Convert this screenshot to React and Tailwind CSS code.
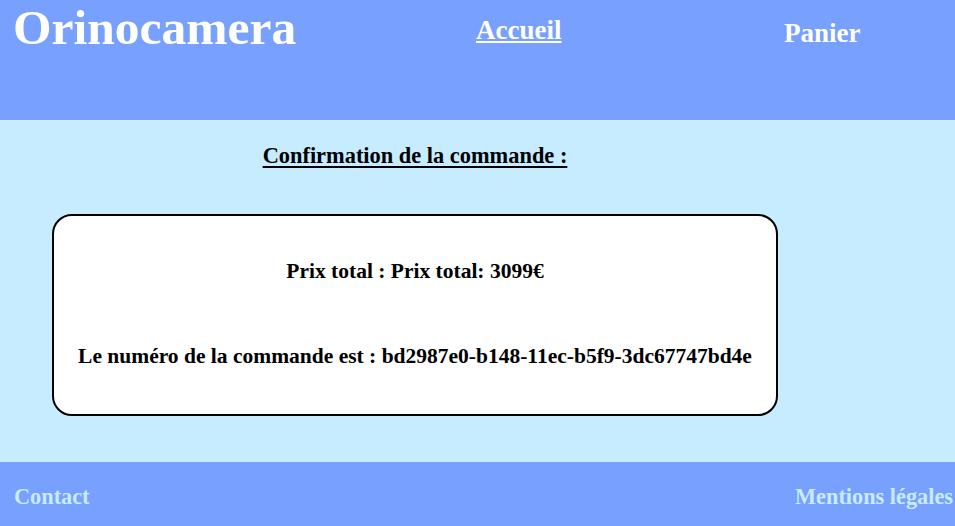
export default function App() {
  const serif = { fontFamily: '"Liberation Serif", "Times New Roman", serif' };
  return (
    <div className="w-[955px] h-[526px] overflow-hidden flex flex-col font-bold" style={serif}>
      <header className="h-[120px] bg-[#78a0fe] flex items-start text-white shrink-0">
        <div className="w-[476px] pl-[13px] pt-[3px] text-[49.5px] leading-[49px]">Orinocamera</div>
        <div className="w-[308px] pt-[17px] text-[27px] leading-[27px]">
          <a className="underline decoration-[2px] underline-offset-[2px]">Accueil</a>
        </div>
        <div className="pt-[20px] text-[27px] leading-[27px]">Panier</div>
      </header>
      <main className="h-[342px] bg-[#c7ecff] pl-[52px] shrink-0">
        <h2 className="w-[726px] text-center pt-[25px] text-[22.4px] leading-[22.4px] text-black">
          <span className="underline decoration-[2px] underline-offset-[3px]">Confirmation de la commande :</span>
        </h2>
        <div className="mt-[47px] w-[726px] h-[202px] border-2 border-black rounded-[20px] bg-white flex flex-col items-center text-black text-[21.5px] leading-[22px]">
          <p className="pt-[44px]">Prix total : Prix total: 3099€</p>
          <p className="mt-[63px]">Le numéro de la commande est : bd2987e0-b148-11ec-b5f9-3dc67747bd4e</p>
        </div>
      </main>
      <footer className="h-[64px] bg-[#78a0fe] flex justify-between items-start pl-[14px] pr-[2px] pt-[24px] text-[22.3px] leading-[22px] text-[#c7ecff] shrink-0">
        <span>Contact</span>
        <span>Mentions légales</span>
      </footer>
    </div>
  );
}
